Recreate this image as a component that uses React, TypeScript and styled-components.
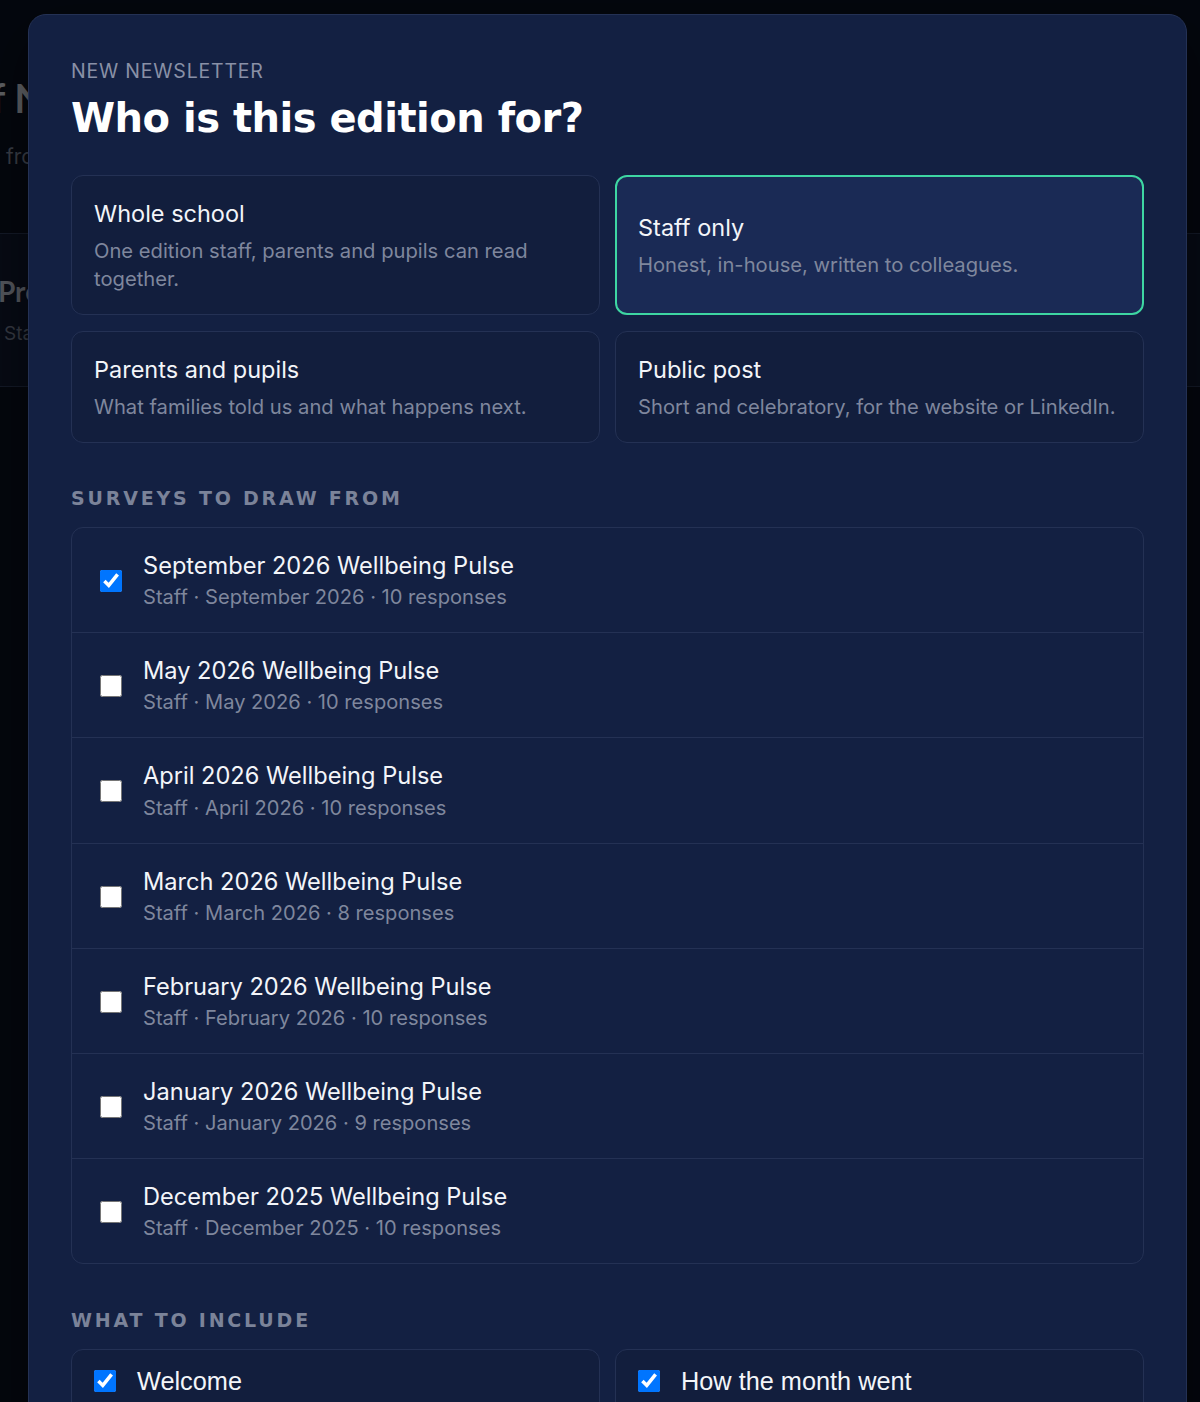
import React from "react";
import styled, { createGlobalStyle } from "styled-components";

const GlobalStyle = createGlobalStyle`
  html, body { margin: 0; padding: 0; }
  body {
    background: #04070e;
    font-family: "Inter", "Noto Sans", sans-serif;
    width: 1200px;
    height: 1402px;
    overflow: hidden;
  }
  * { box-sizing: border-box; }
`;

const Backdrop = styled.div`
  position: relative;
  width: 1200px;
  height: 1402px;
  overflow: hidden;
  background: #04070e;
`;

const BackHeader = styled.header`
  height: 233px;
  padding: 74px 0 0 0;
  display: flex;
  flex-direction: column;
  gap: 22px;
`;

const BackTitle = styled.h1`
  margin: 0 0 0 -78px;
  font-family: "Lato", sans-serif;
  font-weight: 700;
  font-size: 40px;
  line-height: 48px;
  color: #606266;
  white-space: nowrap;
`;

const BackSub = styled.p`
  margin: 0 0 0 6px;
  font-size: 21px;
  color: #3a3e47;
  white-space: nowrap;
`;

const BackBand = styled.section`
  height: 154px;
  background: #070b15;
  border-top: 1px solid #141a28;
  border-bottom: 1px solid #141a28;
  padding: 40px 0 0 0;
  display: flex;
  flex-direction: column;
  gap: 14px;
`;

const BackBandTitle = styled.div`
  margin-left: -2px;
  font-family: "Lato", sans-serif;
  font-weight: 700;
  font-size: 28px;
  line-height: 34px;
  color: #55585f;
  white-space: nowrap;
`;

const BackBandSub = styled.div`
  margin-left: 4px;
  font-size: 19px;
  line-height: 24px;
  color: #363a43;
  white-space: nowrap;
`;

const Overlay = styled.div`
  position: absolute;
  inset: 0;
  padding: 14px 13px 0 28px;
  overflow: hidden;
`;

const Modal = styled.div`
  width: 1159px;
  background: #132042;
  border: 1px solid #243154;
  border-radius: 18px;
  padding: 43px 42px 60px 42px;
  box-shadow: 0 20px 60px rgba(0, 0, 0, 0.5);
`;

const Eyebrow = styled.div`
  font-size: 19.5px;
  line-height: 24px;
  letter-spacing: 0.8px;
  color: #8990a6;
  text-transform: uppercase;
  margin-top: 1px;
`;

const Heading = styled.h2`
  margin: 11px 0 0 0;
  font-family: "DejaVu Sans", sans-serif;
  font-weight: 700;
  font-size: 40px;
  line-height: 48px;
  letter-spacing: -0.5px;
  color: #ffffff;
`;

const AudienceGrid = styled.div`
  margin-top: 33px;
  display: grid;
  grid-template-columns: 1fr 1fr;
  gap: 16px 15px;
`;

const AudienceCard = styled.div<{ $selected?: boolean }>`
  display: flex;
  flex-direction: column;
  justify-content: center;
  gap: 9px;
  padding: ${(p) => (p.$selected ? "23px 21px 20px" : "24px 22px 21px")};
  border-radius: 12px;
  background: ${(p) => (p.$selected ? "#1a2a55" : "#121e3d")};
  border: ${(p) => (p.$selected ? "2px solid #3ed6a2" : "1px solid #243154")};
`;

const CardTitle = styled.div`
  font-size: 23.5px;
  line-height: 28px;
  color: #f3f5f9;
`;

const CardDesc = styled.div`
  font-size: 20.2px;
  line-height: 28px;
  color: #7f879d;
`;

const SectionLabel = styled.div<{ $top: number }>`
  margin-top: ${(p) => p.$top}px;
  font-family: "DejaVu Sans", sans-serif;
  font-weight: 700;
  font-size: 19px;
  line-height: 22px;
  letter-spacing: 2.8px;
  color: #7b8399;
  text-transform: uppercase;
`;

const SurveyList = styled.div`
  margin-top: 18px;
  border: 1px solid #243154;
  border-radius: 12px;
  overflow: hidden;
`;

const SurveyRow = styled.label`
  display: flex;
  align-items: center;
  gap: 21px;
  padding: 24px 28px 22px;
  border-top: 1px solid #243154;
  &:first-child {
    border-top: none;
  }
`;

const Check = styled.input.attrs({ type: "checkbox" })`
  width: 22px;
  height: 22px;
  margin: 0;
  flex: none;
`;

const SurveyText = styled.div`
  display: flex;
  flex-direction: column;
  gap: 4.2px;
`;

const SurveyTitle = styled.div`
  font-size: 23.6px;
  line-height: 28px;
  color: #f3f5f9;
`;

const SurveyMeta = styled.div`
  font-size: 20.1px;
  line-height: 26px;
  color: #7f879d;
`;

const IncludeGrid = styled.div`
  margin-top: 18px;
  display: grid;
  grid-template-columns: 1fr 1fr;
  gap: 16px 15px;
`;

const IncludeCard = styled.label`
  display: flex;
  align-items: flex-start;
  gap: 21px;
  padding: 20px 22px;
  min-height: 100px;
  border: 1px solid #243154;
  border-radius: 12px;
  background: #121e3d;
`;

const IncludeLabel = styled.span`
  font-family: "Liberation Sans", Arial, sans-serif;
  font-size: 25.3px;
  line-height: 22px;
  color: #f3f5f9;
`;

const audiences = [
  { title: "Whole school", desc: "One edition staff, parents and pupils can read together." },
  { title: "Staff only", desc: "Honest, in-house, written to colleagues.", selected: true },
  { title: "Parents and pupils", desc: "What families told us and what happens next." },
  { title: "Public post", desc: "Short and celebratory, for the website or LinkedIn." },
];

const surveys = [
  { title: "September 2026 Wellbeing Pulse", month: "September 2026", n: 10, checked: true },
  { title: "May 2026 Wellbeing Pulse", month: "May 2026", n: 10 },
  { title: "April 2026 Wellbeing Pulse", month: "April 2026", n: 10 },
  { title: "March 2026 Wellbeing Pulse", month: "March 2026", n: 8 },
  { title: "February 2026 Wellbeing Pulse", month: "February 2026", n: 10 },
  { title: "January 2026 Wellbeing Pulse", month: "January 2026", n: 9 },
  { title: "December 2025 Wellbeing Pulse", month: "December 2025", n: 10 },
];

const includes = ["Welcome", "How the month went"];

export default function App() {
  return (
    <>
      <GlobalStyle />
      <Backdrop>
        <BackHeader>
          <BackTitle>Staff Newsletters</BackTitle>
          <BackSub>from your surveys</BackSub>
        </BackHeader>
        <BackBand>
          <BackBandTitle>Previous editions</BackBandTitle>
          <BackBandSub>Staff</BackBandSub>
        </BackBand>
        <Overlay>
          <Modal>
            <Eyebrow>New newsletter</Eyebrow>
            <Heading>Who is this edition for?</Heading>
            <AudienceGrid>
              {audiences.map((a) => (
                <AudienceCard key={a.title} $selected={a.selected}>
                  <CardTitle>{a.title}</CardTitle>
                  <CardDesc>{a.desc}</CardDesc>
                </AudienceCard>
              ))}
            </AudienceGrid>
            <SectionLabel $top={44}>Surveys to draw from</SectionLabel>
            <SurveyList>
              {surveys.map((s) => (
                <SurveyRow key={s.title}>
                  <Check defaultChecked={!!s.checked} />
                  <SurveyText>
                    <SurveyTitle>{s.title}</SurveyTitle>
                    <SurveyMeta>
                      Staff · {s.month} · {s.n} responses
                    </SurveyMeta>
                  </SurveyText>
                </SurveyRow>
              ))}
            </SurveyList>
            <SectionLabel $top={45}>What to include</SectionLabel>
            <IncludeGrid>
              {includes.map((i) => (
                <IncludeCard key={i}>
                  <Check defaultChecked />
                  <IncludeLabel>{i}</IncludeLabel>
                </IncludeCard>
              ))}
            </IncludeGrid>
          </Modal>
        </Overlay>
      </Backdrop>
    </>
  );
}
